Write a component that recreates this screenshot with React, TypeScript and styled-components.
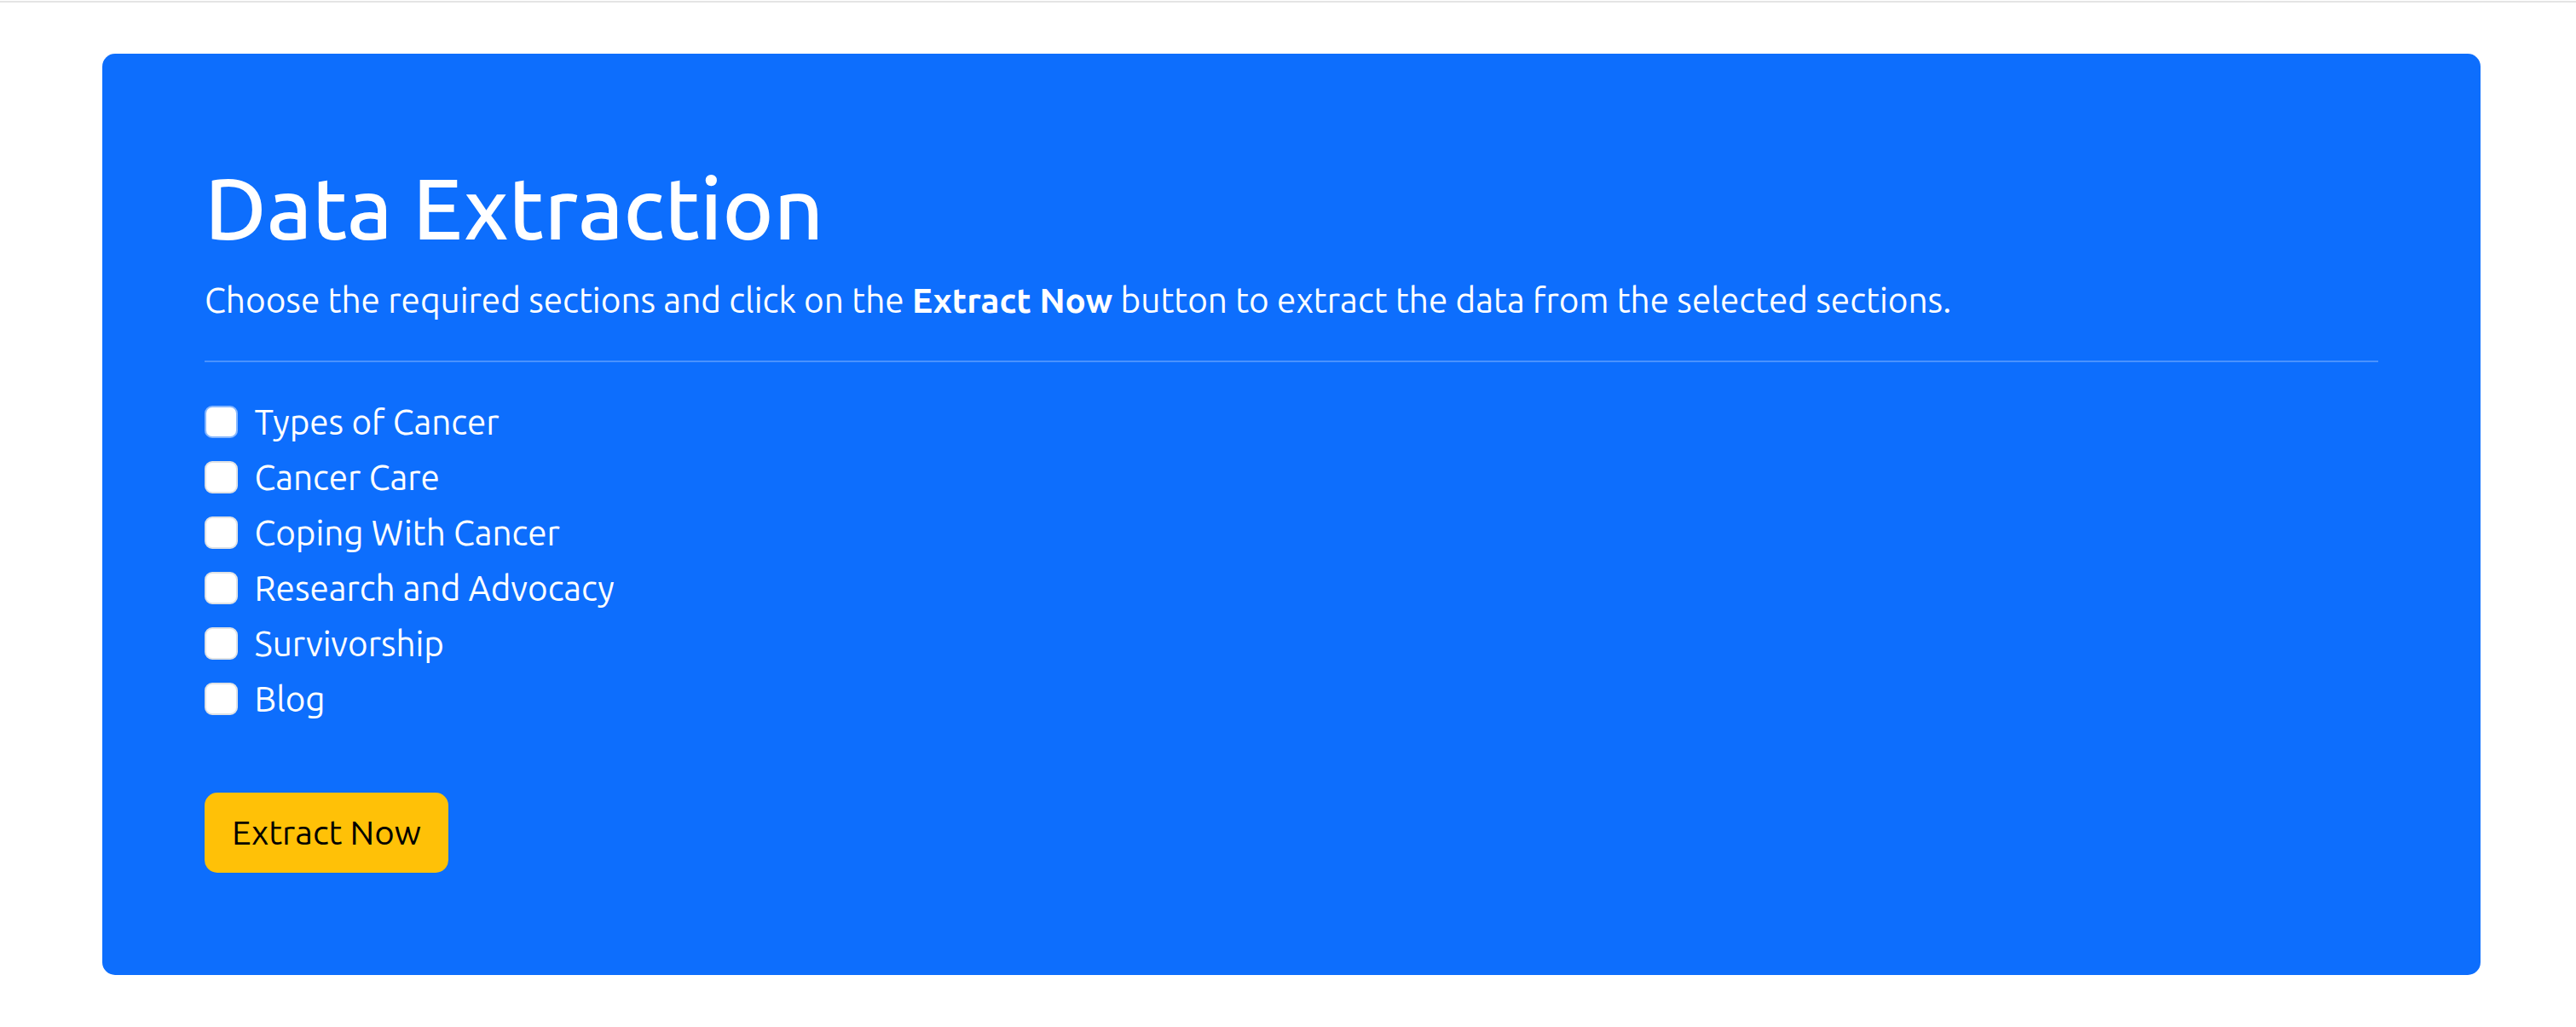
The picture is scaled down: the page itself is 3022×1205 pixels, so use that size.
import React from "react";
import styled, { createGlobalStyle } from "styled-components";

const GlobalStyle = createGlobalStyle`
  html, body {
    margin: 0;
    padding: 0;
    background: #ffffff;
  }
  body {
    font-family: "Ubuntu", Lato, "Open Sans", sans-serif;
    color: #212529;
  }
  * { box-sizing: border-box; }
`;

const TopRule = styled.div`
  height: 2px;
  margin-top: 1px;
  background: #e4e4e4;
`;

const Card = styled.section`
  margin: 60px 112px 0 120px;
  padding: 120px;
  background: #0d6efd;
  border-radius: 15px;
  color: #ffffff;
`;

const Title = styled.h1`
  margin: 0 0 19px;
  font-size: 101.5px;
  line-height: 120px;
  font-weight: 500;
`;

const Lead = styled.p`
  margin: 0;
  font-size: 40.5px;
  line-height: 60px;
  font-weight: 400;

  b {
    font-weight: 700;
  }
`;

const Rule = styled.hr`
  margin: 41px 0 40px;
  border: 0;
  height: 2px;
  background: rgb(74, 146, 254);
`;

const List = styled.div`
  display: flex;
  flex-direction: column;
  gap: 5px;
`;

const Row = styled.label`
  display: flex;
  align-items: center;
  gap: 20px;
  height: 60px;
  font-size: 40.4px;
  line-height: 60px;
  cursor: pointer;
`;

const Box = styled.input<{ $focused?: boolean }>`
  appearance: none;
  margin: 0;
  width: 38.5px;
  height: 38.5px;
  flex: none;
  background: #ffffff;
  border: 2px solid ${(p) => (p.$focused ? "#86b7fe" : "#dee2e6")};
  border-radius: 9px;
`;

const Button = styled.button`
  display: block;
  margin-top: 80px;
  height: 94px;
  padding: 0 32px;
  border: 0;
  border-radius: 15px;
  background: #ffc107;
  color: #000000;
  font-family: inherit;
  font-size: 40.2px;
  line-height: 94px;
  cursor: pointer;
`;

const sections = [
  "Types of Cancer",
  "Cancer Care",
  "Coping With Cancer",
  "Research and Advocacy",
  "Survivorship",
  "Blog",
];

export default function App() {
  return (
    <>
      <GlobalStyle />
      <TopRule />
      <Card>
        <Title>Data Extraction</Title>
        <Lead>
          Choose the required sections and click on the <b>Extract Now</b>{" "}
          button to extract the data from the selected sections.
        </Lead>
        <Rule />
        <List>
          {sections.map((s, i) => (
            <Row key={s}>
              <Box type="checkbox" $focused={i === 0} />
              {s}
            </Row>
          ))}
        </List>
        <Button>Extract Now</Button>
      </Card>
    </>
  );
}
